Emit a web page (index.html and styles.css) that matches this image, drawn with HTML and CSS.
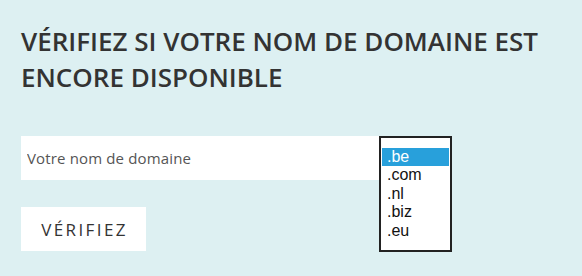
FILE: index.html
```html
<!DOCTYPE html>
<html lang="fr">
<head>
<meta charset="utf-8">
<title>Vérifiez votre nom de domaine</title>
<link rel="stylesheet" href="styles.css">
</head>
<body>
<section class="domain-check">
  <h1 class="title">Vérifiez si votre nom de domaine est encore disponible</h1>
  <form class="form">
    <div class="row">
      <input class="name-input" type="text" placeholder="Votre nom de domaine">
      <ul class="tld-list">
        <li class="tld selected">.be</li>
        <li class="tld">.com</li>
        <li class="tld">.nl</li>
        <li class="tld">.biz</li>
        <li class="tld">.eu</li>
      </ul>
    </div>
    <button class="submit" type="button">Vérifiez</button>
  </form>
</section>
</body>
</html>
```
FILE: styles.css
```css
html, body {
  margin: 0;
  padding: 0;
}
body {
  background: #ddf0f2;
  width: 582px;
  height: 276px;
  overflow: hidden;
}
.domain-check {
  padding: 23px 21px 0 21px;
}
.title {
  margin: 0;
  font-family: "Open Sans", "Liberation Sans", sans-serif;
  font-weight: 600;
  font-size: 26px;
  line-height: 36px;
  text-transform: uppercase;
  color: #333333;
}
.form {
  margin-top: 41px;
}
.row {
  position: relative;
  display: flex;
  width: 358px;
}
.name-input {
  box-sizing: border-box;
  width: 358px;
  height: 44px;
  border: none;
  outline: none;
  margin: 0;
  padding: 0 0 0 6px;
  background: #ffffff;
  font-family: "Open Sans", "Liberation Sans", sans-serif;
  font-weight: 400;
  font-size: 15px;
  letter-spacing: 0.15px;
  color: #555555;
}
.name-input::placeholder {
  color: #555555;
  opacity: 1;
}
.tld-list {
  position: absolute;
  left: 358px;
  top: 0;
  box-sizing: border-box;
  width: 73px;
  height: 116px;
  margin: 0;
  padding: 10px 1px 0 1px;
  list-style: none;
  background: #ffffff;
  border: 2px solid #222222;
  font-family: "Liberation Sans", Arial, sans-serif;
  font-size: 16px;
  line-height: 18.4px;
  color: #111111;
}
.tld {
  padding-left: 5px;
}
.tld.selected {
  background: #28a0db;
  color: #ffffff;
}
.submit {
  display: block;
  box-sizing: border-box;
  width: 125px;
  height: 44px;
  margin: 27px 0 0 0;
  padding: 0 0 0 2px;
  border: none;
  background: #ffffff;
  font-family: "Open Sans", "Liberation Sans", sans-serif;
  font-size: 17px;
  letter-spacing: 2.4px;
  text-transform: uppercase;
  color: #333333;
}
```
